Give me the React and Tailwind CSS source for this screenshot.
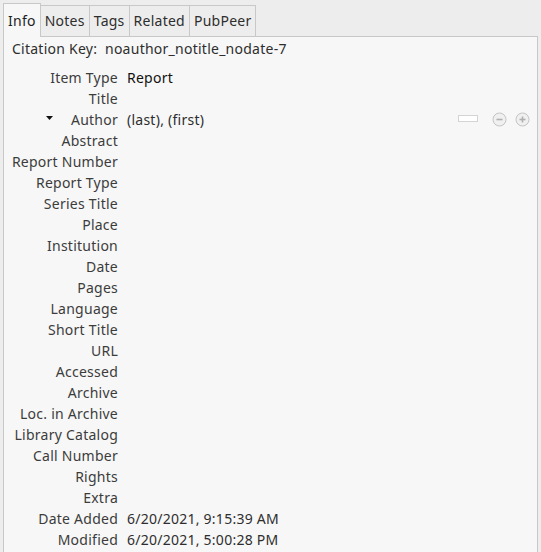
import React from 'react';

const tabs = ['Info', 'Notes', 'Tags', 'Related', 'PubPeer'];

const fields = [
  ['Item Type', 'Report'],
  ['Title', ''],
  ['Author', '(last), (first)'],
  ['Abstract', ''],
  ['Report Number', ''],
  ['Report Type', ''],
  ['Series Title', ''],
  ['Place', ''],
  ['Institution', ''],
  ['Date', ''],
  ['Pages', ''],
  ['Language', ''],
  ['Short Title', ''],
  ['URL', ''],
  ['Accessed', ''],
  ['Archive', ''],
  ['Loc. in Archive', ''],
  ['Library Catalog', ''],
  ['Call Number', ''],
  ['Rights', ''],
  ['Extra', ''],
  ['Date Added', '6/20/2021, 9:15:39 AM'],
  ['Modified', '6/20/2021, 5:00:28 PM'],
];

function CircleBtn({ plus }) {
  return (
    <svg width="15" height="15" viewBox="0 0 15 15">
      <circle cx="7.5" cy="7.5" r="6.5" fill="#f0f0f0" stroke="#c4c4c4" strokeWidth="1" />
      <line x1="4.5" y1="7.5" x2="10.5" y2="7.5" stroke="#b0b0b0" strokeWidth="1.6" />
      {plus && <line x1="7.5" y1="4.5" x2="7.5" y2="10.5" stroke="#b0b0b0" strokeWidth="1.6" />}
    </svg>
  );
}

export default function App() {
  return (
    <div className="w-[541px] h-[552px] overflow-hidden bg-[#ededed] pl-[3px] pr-[3px] pt-[3px] text-[14px] tracking-[0.25px] text-[#3c3c3c] whitespace-nowrap" style={{ fontFamily: '"Noto Sans", "DejaVu Sans", sans-serif' }}>
      {/* Tabs */}
      <div className="flex items-end h-[33px]">
        {tabs.map((t, i) => (
          <div
            key={t}
            className={
              i === 0
                ? 'h-[34px] px-[4px] pt-[6px] border border-b-0 border-[#c8c8c8] bg-[#f7f7f7] text-[#1e1e1e] relative z-10 -mb-px'
                : 'h-[31px] px-[4px] pt-[4px] border border-b-0 border-l-0 border-[#c8c8c8] bg-[#ededed] text-[#2e2e2e]'
            }
          >
            {t}
          </div>
        ))}
      </div>

      {/* Panel */}
      <div className="h-[560px] border border-[#c8c8c8] bg-[#f7f7f7] pl-[8px]">
        <div className="h-[22px] flex items-center text-[#2e2e2e]">
          Citation Key:&nbsp; noauthor_notitle_nodate-7
        </div>
        <div className="mt-[8px] flex flex-col">
          {fields.map(([label, value]) => (
            <div key={label} className="h-[21px] flex items-center">
              <div className="w-[106px] flex justify-end items-center relative shrink-0">
                {label === 'Author' && (
                  <svg className="absolute left-[34px] top-[7px]" width="7" height="5" viewBox="0 0 7 5">
                    <path d="M0 0 L7 0 L3.5 4 Z" fill="#111" />
                  </svg>
                )}
                {label}
              </div>
              <div className={'ml-[9px] flex-1 flex items-center ' + (label === 'Item Type' ? 'text-[#111]' : 'text-[#2e2e2e]')}>
                {value}
                {label === 'Author' && (
                  <div className="ml-auto mr-[7px] flex items-center gap-[8px]">
                    <div className="w-[20px] h-[7px] bg-white border border-[#d4d4d4] mr-[6px] -mt-[3px]" />
                    <CircleBtn />
                    <CircleBtn plus />
                  </div>
                )}
              </div>
            </div>
          ))}
        </div>
      </div>
    </div>
  );
}
